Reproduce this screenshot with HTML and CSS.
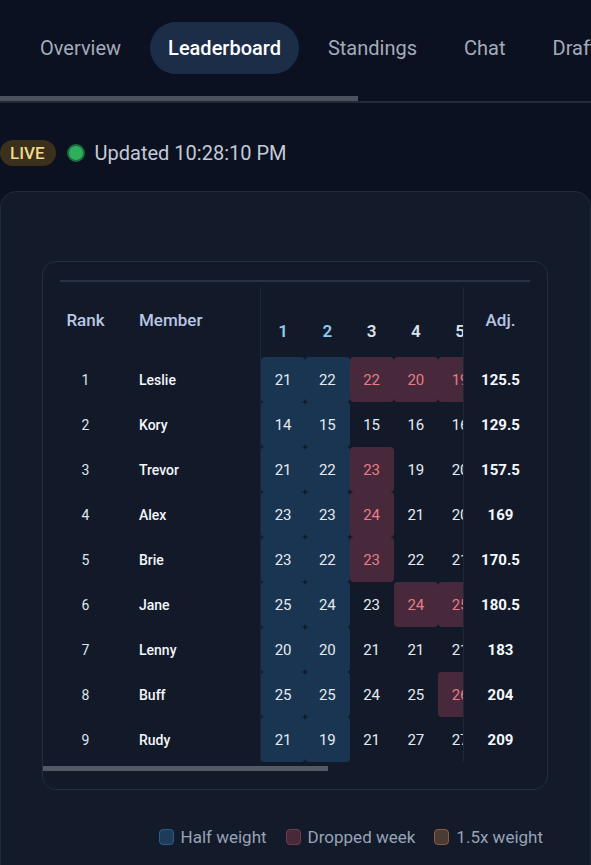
FILE: index.html
```html
<!DOCTYPE html>
<html lang="en">
<head>
<meta charset="utf-8">
<title>Leaderboard</title>
<link rel="stylesheet" href="styles.css">
</head>
<body>
<nav class="tabs">
  <span class="tab">Overview</span>
  <span class="tab active">Leaderboard</span>
  <span class="tab">Standings</span>
  <span class="tab">Chat</span>
  <span class="tab">Draft</span>
</nav>
<div class="tabs-scroll"><div class="tabs-thumb"></div></div>

<div class="status">
  <span class="live">LIVE</span>
  <span class="dot"></span>
  <span class="updated">Updated 10:28:10 PM</span>
</div>

<section class="card">
  <div class="table-card">
    <div class="top-line"></div>
    <div class="table">
      <div class="row head">
        <div class="c-rank">Rank</div>
        <div class="c-member">Member</div>
        <div class="c-weeks">
          <span class="wk half">1</span><span class="wk half">2</span><span class="wk">3</span><span class="wk">4</span><span class="wk">5</span>
        </div>
        <div class="c-adj">Adj.</div>
      </div>

      <div class="row">
        <div class="c-rank">1</div><div class="c-member">Leslie</div>
        <div class="c-weeks"><span class="cell hw">21</span><span class="cell hw">22</span><span class="cell dr">22</span><span class="cell dr">20</span><span class="cell dr">19</span></div>
        <div class="c-adj">125.5</div>
      </div>
      <div class="row">
        <div class="c-rank">2</div><div class="c-member">Kory</div>
        <div class="c-weeks"><span class="cell hw">14</span><span class="cell hw">15</span><span class="cell">15</span><span class="cell">16</span><span class="cell">16</span></div>
        <div class="c-adj">129.5</div>
      </div>
      <div class="row">
        <div class="c-rank">3</div><div class="c-member">Trevor</div>
        <div class="c-weeks"><span class="cell hw">21</span><span class="cell hw">22</span><span class="cell dr">23</span><span class="cell">19</span><span class="cell">20</span></div>
        <div class="c-adj">157.5</div>
      </div>
      <div class="row">
        <div class="c-rank">4</div><div class="c-member">Alex</div>
        <div class="c-weeks"><span class="cell hw">23</span><span class="cell hw">23</span><span class="cell dr">24</span><span class="cell">21</span><span class="cell">20</span></div>
        <div class="c-adj">169</div>
      </div>
      <div class="row">
        <div class="c-rank">5</div><div class="c-member">Brie</div>
        <div class="c-weeks"><span class="cell hw">23</span><span class="cell hw">22</span><span class="cell dr">23</span><span class="cell">22</span><span class="cell">21</span></div>
        <div class="c-adj">170.5</div>
      </div>
      <div class="row">
        <div class="c-rank">6</div><div class="c-member">Jane</div>
        <div class="c-weeks"><span class="cell hw">25</span><span class="cell hw">24</span><span class="cell">23</span><span class="cell dr">24</span><span class="cell dr">25</span></div>
        <div class="c-adj">180.5</div>
      </div>
      <div class="row">
        <div class="c-rank">7</div><div class="c-member">Lenny</div>
        <div class="c-weeks"><span class="cell hw">20</span><span class="cell hw">20</span><span class="cell">21</span><span class="cell">21</span><span class="cell">21</span></div>
        <div class="c-adj">183</div>
      </div>
      <div class="row">
        <div class="c-rank">8</div><div class="c-member">Buff</div>
        <div class="c-weeks"><span class="cell hw">25</span><span class="cell hw">25</span><span class="cell">24</span><span class="cell">25</span><span class="cell dr">26</span></div>
        <div class="c-adj">204</div>
      </div>
      <div class="row">
        <div class="c-rank">9</div><div class="c-member">Rudy</div>
        <div class="c-weeks"><span class="cell hw">21</span><span class="cell hw">19</span><span class="cell">21</span><span class="cell">27</span><span class="cell">27</span></div>
        <div class="c-adj">209</div>
      </div>
    </div>
    <div class="table-scroll"></div>
  </div>

  <div class="legend">
    <span class="legend-item"><span class="sw sw-half"></span>Half weight</span>
    <span class="legend-item"><span class="sw sw-drop"></span>Dropped week</span>
    <span class="legend-item"><span class="sw sw-boost"></span>1.5x weight</span>
  </div>
</section>
</body>
</html>
```

FILE: styles.css
```css
* { box-sizing: border-box; }
html, body { margin: 0; padding: 0; }
body {
  background: #0b1120;
  font-family: Roboto, "Noto Sans", "Liberation Sans", sans-serif;
  color: #e6eaf0;
  width: 591px;
  overflow: hidden;
}

.tabs {
  display: flex;
  gap: 11px;
  padding: 22px 0 0 22px;
  white-space: nowrap;
  overflow: hidden;
}
.tab {
  flex: none;
  height: 52px;
  line-height: 52px;
  padding: 0 18px;
  font-size: 20px;
  color: #a3acba;
  border-radius: 26px;
}
.tab.active {
  background: #1b2d47;
  color: #ffffff;
  font-weight: 500;
}

.tabs-scroll {
  margin-top: 22px;
  height: 7px;
  border-bottom: 2px solid #232b3b;
}
.tabs-thumb {
  width: 358px;
  height: 5px;
  background: #4b515d;
}

.status {
  display: flex;
  align-items: center;
  margin-top: 37px;
  height: 26px;
}
.live {
  height: 26px;
  line-height: 26px;
  padding: 0 11px 0 10px;
  border-radius: 13px;
  background: #3a301c;
  color: #f2da8a;
  font-size: 17px;
  font-weight: 500;
}
.dot {
  width: 18px;
  height: 18px;
  margin-left: 11px;
  border-radius: 50%;
  background: #2fae5c;
  border: 2px solid #1d6a3e;
}
.updated {
  margin-left: 10px;
  font-size: 20px;
  color: #c3cad6;
}

.card {
  margin-top: 25px;
  width: 591px;
  background: #131a2a;
  border: 1px solid #212a3a;
  border-radius: 16px;
  padding: 69px 42px 60px 41px;
}

.table-card {
  border: 1px solid #232d3e;
  border-radius: 14px;
  background: #121a2a;
  padding: 18px 0 18px 0;
}
.top-line {
  height: 2px;
  margin: 0 17px;
  background: #283244;
}
.table {
  margin-top: 5px;
}
.row {
  display: grid;
  grid-template-columns: 85px 132px 204px 73px;
  height: 45px;
  align-items: stretch;
}
.row.head {
  height: 70px;
}
.c-rank {
  display: flex;
  align-items: center;
  justify-content: center;
  font-size: 14px;
  color: #dfe4ec;
}
.c-member {
  display: flex;
  align-items: center;
  padding-left: 11px;
  font-size: 14px;
  font-weight: 500;
  color: #f4f6fa;
}
.c-adj {
  display: flex;
  align-items: center;
  justify-content: center;
  font-size: 15px;
  font-weight: 700;
  color: #f6f8fb;
}
.c-weeks {
  display: flex;
  overflow: hidden;
  border-left: 1px solid #1e2737;
  border-right: 1px solid #1e2737;
}

.head .c-rank,
.head .c-member,
.head .c-adj {
  align-items: flex-start;
  padding-top: 23px;
  font-size: 17px;
  font-weight: 500;
  color: #b8c6e4;
}
.head .c-weeks {
  align-items: flex-start;
}
.wk {
  flex: 0 0 44.25px;
  text-align: center;
  padding-top: 34px;
  font-size: 17px;
  font-weight: 600;
  color: #dce2ec;
}
.wk.half { color: #8ecaf0; }

.cell {
  flex: 0 0 44.25px;
  height: 45px;
  display: flex;
  align-items: center;
  justify-content: center;
  font-size: 15px;
  color: #e6eaf0;
  border-radius: 4px;
}
.cell.hw { background: #193552; }
.cell.dr { background: #47293b; color: #e67d88; }

.table-scroll {
  margin-top: 4px;
  width: 285px;
  height: 5px;
  background: #535965;
}

.legend {
  display: flex;
  justify-content: flex-end;
  gap: 19px;
  margin-top: 37px;
  padding-right: 5px;
  font-size: 17px;
  color: #97a3b6;
}
.legend-item {
  display: flex;
  align-items: center;
  gap: 7px;
}
.sw {
  width: 15px;
  height: 16px;
  border-radius: 4px;
  border: 1.5px solid;
}
.sw-half { background: #1d3c5a; border-color: #2c5c87; }
.sw-drop { background: #48293a; border-color: #6e3b4d; }
.sw-boost { background: #4a3b33; border-color: #8c5b3c; }
```
